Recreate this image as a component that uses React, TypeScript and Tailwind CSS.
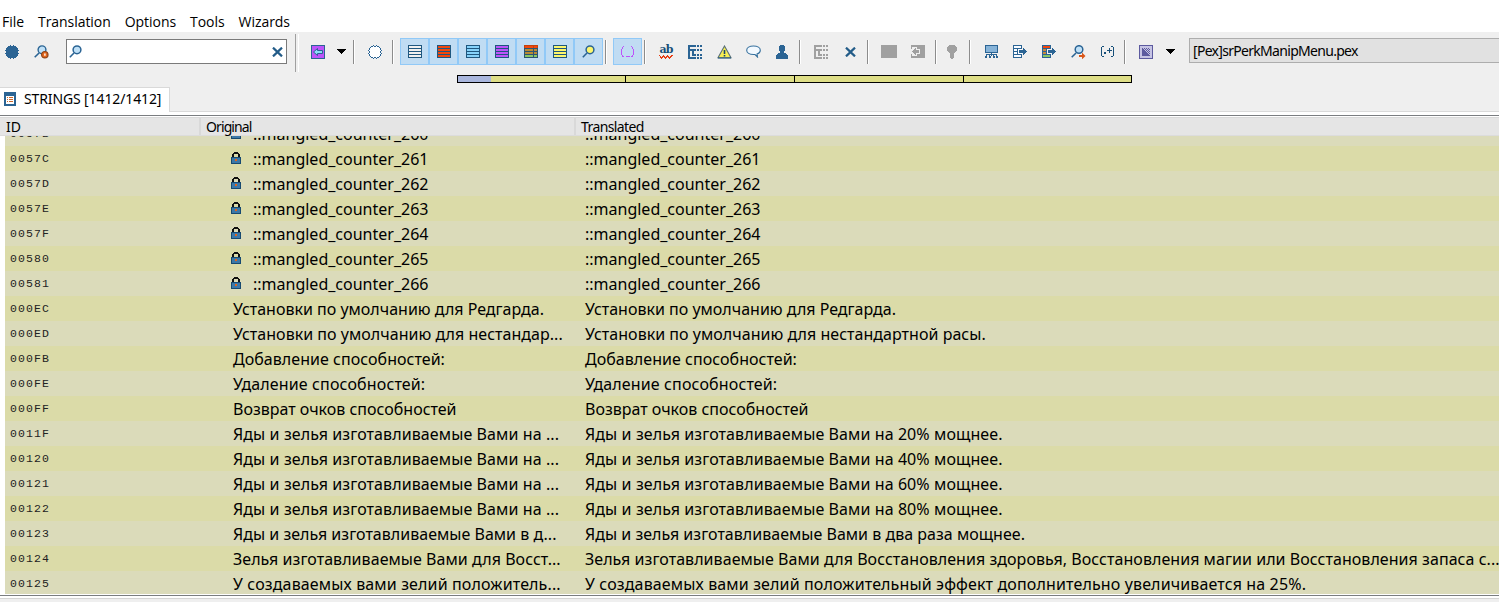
import type { ReactNode } from "react";

const NAVY = "#2b6494";

const YADY = "tracking-[0.095px]";
const ZELYA = "tracking-[0.05px]";
const BONUS = "tracking-[0.14px]";

const rows = [
  { id: "0057B", locked: true, original: "::mangled_counter_260", translated: "::mangled_counter_260" },
  { id: "0057C", locked: true, original: "::mangled_counter_261", translated: "::mangled_counter_261" },
  { id: "0057D", locked: true, original: "::mangled_counter_262", translated: "::mangled_counter_262" },
  { id: "0057E", locked: true, original: "::mangled_counter_263", translated: "::mangled_counter_263" },
  { id: "0057F", locked: true, original: "::mangled_counter_264", translated: "::mangled_counter_264" },
  { id: "00580", locked: true, original: "::mangled_counter_265", translated: "::mangled_counter_265" },
  { id: "00581", locked: true, original: "::mangled_counter_266", translated: "::mangled_counter_266" },
  { id: "000EC", original: "Установки по умолчанию для Редгарда.", translated: "Установки по умолчанию для Редгарда." },
  { id: "000ED", original: "Установки по умолчанию для нестандар...", translated: "Установки по умолчанию для нестандартной расы.", spacing: "tracking-[0.03px]" },
  { id: "000FB", original: "Добавление способностей:", translated: "Добавление способностей:", spacing: "tracking-[0.04px]" },
  { id: "000FE", original: "Удаление способностей:", translated: "Удаление способностей:", spacing: "tracking-[0.14px]" },
  { id: "000FF", original: "Возврат очков способностей", translated: "Возврат очков способностей" },
  { id: "0011F", original: "Яды и зелья изготавливаемые Вами на ...", translated: "Яды и зелья изготавливаемые Вами на 20% мощнее.", spacing: YADY },
  { id: "00120", original: "Яды и зелья изготавливаемые Вами на ...", translated: "Яды и зелья изготавливаемые Вами на 40% мощнее.", spacing: YADY },
  { id: "00121", original: "Яды и зелья изготавливаемые Вами на ...", translated: "Яды и зелья изготавливаемые Вами на 60% мощнее.", spacing: YADY },
  { id: "00122", original: "Яды и зелья изготавливаемые Вами на ...", translated: "Яды и зелья изготавливаемые Вами на 80% мощнее.", spacing: YADY },
  { id: "00123", original: "Яды и зелья изготавливаемые Вами в д...", translated: "Яды и зелья изготавливаемые Вами в два раза мощнее.", spacing: "tracking-[0.02px]" },
  { id: "00124", original: "Зелья изготавливаемые Вами для Восст...", translated: "Зелья изготавливаемые Вами для Восстановления здоровья, Восстановления магии или Восстановления запаса с...", spacing: ZELYA },
  { id: "00125", original: "У создаваемых вами зелий положитель...", translated: "У создаваемых вами зелий положительный эффект дополнительно увеличивается на 25%.", spacing: BONUS },
];

const Icon = ({ children, w = 14, h = 14 }: { children: ReactNode; w?: number; h?: number }) => (
  <svg width={w} height={h} viewBox={`0 0 ${w} ${h}`} shapeRendering="crispEdges" className="block shrink-0">
    {children}
  </svg>
);

const Slot = ({ children, on }: { children: ReactNode; on?: boolean }) => (
  <div
    className={
      on
        ? "flex h-[27px] w-[29px] shrink-0 items-center justify-center border border-[#91c9f7] bg-[#c0dcf3]"
        : "flex h-[27px] w-[29px] shrink-0 items-center justify-center pr-px"
    }
  >
    {children}
  </div>
);

const Sep = () => (
  <div className="h-6 w-[10px] shrink-0 pl-[2px]">
    <div className="h-full w-[2px] border-l border-r border-l-[#8c8c8c] border-r-white" />
  </div>
);

const Caret = () => (
  <Icon w={9} h={5}>
    <path d="M0 0h9v1H8v1H7v1H6v1H5v1H4V4H3V3H2V2H1V1H0z" fill="#000" />
  </Icon>
);

const Dot = () => (
  <Icon>
    <path d="M5 0h1v1h2V0h1v1h2v1h1v1h1v2h1v1h-1v2h1v1h-1v2h-1v1h-1v1H9v1H8v-1H6v1H5v-1H3v-1H2v-1H1V9H0V8h1V6H0V5h1V3h1V2h1V1h2z" fill={NAVY} />
  </Icon>
);

const DashedCircle = () => (
  <Icon>
    <path d="M5 1h4v1h2v1h1v2h1v4h-1v2h-1v1H9v1H5v-1H3v-1H2V9H1V5h1V3h1V2h2z" fill="#fff" />
    <path d="M5 0h1v1H5zM8 0h1v1H8zM6 1h2v1H6zM3 1h2v1H3zM9 1h2v1H9zM2 2h1v1H2zM11 2h1v1h-1zM1 3h1v2H1zM12 3h1v2h-1zM0 5h1v1H0zM13 5h1v1h-1zM1 6h1v2H1zM12 6h1v2h-1zM0 8h1v1H0zM13 8h1v1h-1zM1 9h1v2H1zM12 9h1v2h-1zM2 11h1v1H2zM11 11h1v1h-1zM3 12h2v1H3zM9 12h2v1H9zM5 13h1v1H5zM8 13h1v1H8zM6 12h2v1H6z" fill={NAVY} />
  </Icon>
);

const Lines = ({ fill }: { fill: string }) => (
  <Icon w={14} h={13}>
    <rect width="14" height="13" fill={fill} />
    <path d="M0 .5h14M0 3.5h14M0 6.5h14M0 9.5h14M0 12.5h14M.5 0v13M13.5 0v13" stroke="#1f577f" />
  </Icon>
);

const MixedLines = () => (
  <Icon w={14} h={13}>
    <rect width="14" height="4" fill="#f2460c" />
    <rect y="4" width="14" height="5" fill="#b98a35" />
    <rect y="9" width="14" height="4" fill="#8cc665" />
    <path d="M0 3.5h14M0 6.5h14M0 9.5h14M0 12.5h14M.5 3v10M9.5 3v10M13.5 3v10" stroke="#2a5572" />
    <path d="M0 .5h14M.5 0v3M9.5 0v3M13.5 0v3" stroke="#c2410c" />
  </Icon>
);

const Lens = ({ fill = "#bfe0f7" }: { fill?: string }) => (
  <svg width="13" height="13" viewBox="0 0 13 13" className="block shrink-0">
    <path d="M.8 12.2 5 8" stroke={NAVY} strokeWidth="1.6" />
    <circle cx="8" cy="4.8" r="3.9" fill={fill} stroke={NAVY} strokeWidth="1.5" />
  </svg>
);

const LensGear = () => (
  <svg width="15" height="14" viewBox="0 0 15 14" className="block">
    <path d="M.7 12.3 5 8" stroke={NAVY} strokeWidth="1.6" />
    <circle cx="8" cy="4.8" r="3.9" fill="#bfe0f7" stroke={NAVY} strokeWidth="1.4" />
    <circle cx="10.8" cy="9.7" r="3.2" fill="#e2651b" stroke="#8b4219" strokeWidth="1.2" />
    <path d="M10.2 8.6h1.4v2.2h-1.4z" fill="#fff" />
  </svg>
);

const LensArrow = () => (
  <svg width="15" height="14" viewBox="0 0 15 14" className="block">
    <path d="M.7 12.3 5 8" stroke={NAVY} strokeWidth="1.6" />
    <circle cx="8" cy="4.5" r="3.8" fill="#bfe0f7" stroke={NAVY} strokeWidth="1.5" />
    <path d="M8 10h3V7.500l3.500 3.500L11 14.300V12H8z" fill="#d9571a" />
  </svg>
);

const ImportBox = () => (
  <Icon>
    <rect x=".5" y=".5" width="13" height="13" fill="#bd54fa" stroke={NAVY} />
    <path d="M2.5 7 6.5 3.5v2h5v3h-5v2z" fill="#8bdcf8" stroke={NAVY} shapeRendering="auto" />
  </Icon>
);

const Brackets = () => (
  <Icon w={13} h={12}>
    <path d="M3 .5h-1M1.5 1v2M.5 3v6M1.5 9v2M2 10.500h1M10 .5h1M11.5 1v2M12.5 3v6M11.5 9v2M10 10.500h1M5 10.5h4" stroke="#bd54fa" fill="none" />
  </Icon>
);

const Spelling = () => (
  <div className="flex h-[14px] w-[14px] flex-col items-center">
    <span className="h-[10px] font-['DejaVu_Serif',serif] text-[11px] leading-[9px] font-bold tracking-[-0.8px] text-[#174f79]">ab</span>
    <Icon w={14} h={4}>
      <path d="M0 0h1v1H0zM1 1h1v2H1zM2 2h1v2H2zM3 1h1v2H3zM4 0h1v2H4zM5 1h1v2H5zM6 2h1v2H6zM7 1h1v2H7zM8 0h1v2H8zM9 1h1v2H9zM10 2h1v2h-1zM11 1h1v2h-1zM12 0h1v2h-1zM13 0h1v1h-1z" fill="#e63c12" />
    </Icon>
  </div>
);

const Tree = ({ color = NAVY }: { color?: string }) => (
  <Icon>
    <path d="M0 0h8v2H2v10h6v2H0z" fill={color} />
    <path d="M2 4h6v2H6v3h2v2H4V6H2z" fill={color} />
    <path d="M9 0h2v2H9zM12 0h2v2h-2zM9 4h2v2H9zM12 4h2v2h-2zM9 9h2v2H9zM12 9h2v2h-2zM9 12h2v2H9zM12 12h2v2h-2z" fill={color} />
  </Icon>
);

const Warning = () => (
  <svg width="15" height="14" viewBox="0 0 15 14" className="block">
    <path d="M7.5 1 14 12.8H1z" fill="#f6ee52" stroke="#5a7078" strokeWidth="1.1" />
    <path d="M1 13h13" stroke="#1f577f" />
    <path d="M6.7 5h1.6v4H6.7zM6.7 10h1.6v1.6H6.7z" fill="#16456a" />
  </svg>
);

const Bubble = () => (
  <svg width="15" height="13" viewBox="0 0 15 13" className="block">
    <path d="M7.5 1C3.500 1 .7 2.800.7 5.200S3.500 9.500 7.500 9.500h1.500L11.500 12 11 9C13 8.400 14.300 7 14.300 5.200 14.300 2.800 11.500 1 7.500 1z" fill="#f2f9ff" stroke="#37719e" strokeWidth="1.1" />
  </svg>
);

const Person = () => (
  <Icon w={12}>
    <path d="M4 0h4v1h1v5H8v2h2v1h1v1h1v4H0v-4h1V9h1V8h2V6H3V1h1z" fill={NAVY} />
  </Icon>
);

const Cross = () => (
  <svg width="11" height="10" viewBox="0 0 11 10" className="block">
    <path d="M1 .6 10 9.400M10 .6 1 9.400" stroke="#235c88" strokeWidth="2.200" />
  </svg>
);

const GrayImport = () => (
  <Icon h={13}>
    <path d="M0 0h14v13H0v-2h6V9h3V4H6V2H0z" fill="#a0a0a0" />
    <path d="M0 0h1v4H0zM0 9h1v4H0z" fill="#a0a0a0" />
    <path d="M1 2h4v1H1zM1 10h4v1H1z" fill="#efefef" />
    <path d="M1 6h1V5h1V4h1V3h1v2h3v3H5v2H4V9H3V8H2V7H1z" fill="#a0a0a0" />
  </Icon>
);

const Bulb = () => (
  <Icon w={10}>
    <path d="M2 0h6v1h1v1h1v4H9v1H8v1H7v1H3V8H2V7H1V6H0V2h1V1h1z" fill="#a0a0a0" />
    <path d="M3 9h4v4H6v1H4v-1H3z" fill="#a0a0a0" />
  </Icon>
);

const Network = () => (
  <Icon w={13} h={13}>
    <rect x=".5" y=".5" width="12" height="7" fill="#86b3d8" stroke={NAVY} />
    <path d="M6.500 8v3M1.500 12v-3M4.500 12v-3M8.500 12v-3M11.500 12v-3M1 9.500h11" stroke={NAVY} />
    <path d="M0 11h2v2H0zM3.500 11h2v2h-2zM7.500 11h2v2h-2zM11 11h2v2h-2z" fill={NAVY} />
  </Icon>
);

const Export = ({ mixed }: { mixed?: boolean }) => (
  <Icon>
    {mixed ? (
      <>
        <path d="M0 1h9v3H0z" fill="#f2460c" />
        <path d="M0 4h5v5H0z" fill="#c68a3b" />
        <path d="M0 10h9v3H0z" fill="#8cc665" />
      </>
    ) : (
      <path d="M1 1h8v12H1z" fill="#f8fbff" />
    )}
    <path d="M.5 0v13M0 .5h9M8.500 0v4M0 3.500h9M0 6.500h5M0 9.500h9M0 12.500h9M8.500 9v4M4.500 3v7" stroke={NAVY} />
    <path d="M6 5h4V3h1v1h1v1h1v1h1v1h-1v1h-1v1h-1v1h-1V8H6z" fill={NAVY} />
  </Icon>
);

const Regex = () => (
  <Icon w={13} h={11}>
    <path d="M1 .5h2M.5 1v9M1 10.500h2M10 .5h2M12.500 1v9M10 10.500h2M6 4.500h5M8.500 2v5" stroke="#174f79" fill="none" />
    <path d="M3 6h2v2H3z" fill="#174f79" />
  </Icon>
);

const Dither = () => (
  <Icon>
    <rect width="14" height="14" fill="#5c5a9f" />
    <rect x="1" y="1" width="12" height="12" fill="#c6c4e4" />
    <path d="M3 3h1v1h1v1h1v1h1v1h1v1h1v1h1v1h1v1H3z" fill="#5c5a9f" />
    <path d="M5 3h1v1H5zM7 3h1v1H7zM9 3h1v1H9zM6 4h1v1H6zM8 4h1v1H8zM10 4h1v1h-1zM7 5h1v1H7zM9 5h1v1H9zM8 6h1v1H8zM10 6h1v1h-1zM9 7h1v1H9zM10 8h1v1h-1z" fill="#5c5a9f" />
  </Icon>
);

const Lock = () => (
  <Icon w={10} h={12}>
    <path d="M3 0h4v1h1v1h1v3H7V2H3v3H1V2h1V1h1z" fill="#111" />
    <rect y="5" width="10" height="7" fill="#174a70" />
    <rect x="1" y="6" width="8" height="5" fill="#3c78a8" />
    <rect x="4" y="7" width="2" height="2" fill="#e2651b" />
  </Icon>
);

const TabIcon = () => (
  <Icon w={12} h={14}>
    <rect width="12" height="14" fill="#2b6494" />
    <rect x="2" y="4" width="8" height="8" fill="#fff" />
    <path d="M3 5.500h1M5 5.500h4M3 7.500h1M5 7.500h4M3 9.500h1M5 9.500h4" stroke="#c8662a" />
  </Icon>
);

const MenuBar = () => (
  <div className="flex h-8 gap-[14px] bg-white pt-3 pl-[2px] font-['Open_Sans','Noto_Sans',sans-serif] text-[14px] leading-5 tracking-[-0.05px]">
    <span>File</span>
    <span>Translation</span>
    <span>Options</span>
    <span>Tools</span>
    <span>Wizards</span>
  </div>
);

const Toolbar = () => (
  <div className="flex h-[43px] shrink-0 items-start overflow-hidden bg-[#efefef] pt-[6px]">
    <div className="flex h-[27px] w-[66px] shrink-0 items-center gap-[15px] pl-[5px]">
      <Dot />
      <LensGear />
    </div>
    <div className="mt-px flex h-[25px] w-[221px] shrink-0 items-center justify-between border border-[#7a7a7a] bg-white pr-[3px] pl-[2px]">
      <Lens />
      <Cross />
    </div>
    <div className="-mt-1 ml-2 h-[38px] w-[9px] shrink-0">
      <div className="h-full w-[4px] border-l border-r border-l-[#a0a0a0] border-r-white" />
    </div>
    <div className="flex h-[27px] shrink-0 items-center">
      <Slot><ImportBox /></Slot>
      <div className="flex w-[18px] justify-center pr-px"><Caret /></div>
      <Sep />
      <Slot><DashedCircle /></Slot>
      <Sep />
      <Slot on><Lines fill="#f0f0f0" /></Slot>
      <Slot on><Lines fill="#f2460c" /></Slot>
      <Slot on><Lines fill="#86d2fa" /></Slot>
      <Slot on><Lines fill="#bd54fa" /></Slot>
      <Slot on><MixedLines /></Slot>
      <Slot on><Lines fill="#fcf66e" /></Slot>
      <Slot on><Lens fill="#fcf66e" /></Slot>
      <Sep />
      <Slot on><Brackets /></Slot>
      <Sep />
      <Slot><Spelling /></Slot>
      <Slot><Tree /></Slot>
      <Slot><Warning /></Slot>
      <Slot><Bubble /></Slot>
      <Slot><Person /></Slot>
      <Sep />
      <Slot><Tree color="#a0a0a0" /></Slot>
      <Slot><Cross /></Slot>
      <Sep />
      <Slot><div className="h-[13px] w-4 bg-[#a0a0a0]" /></Slot>
      <Slot><GrayImport /></Slot>
      <Sep />
      <div className="w-6 pl-1"><Bulb /></div>
      <Sep />
      <Slot><Network /></Slot>
      <Slot><Export /></Slot>
      <Slot><Export mixed /></Slot>
      <Slot><LensArrow /></Slot>
      <Slot><Regex /></Slot>
      <Sep />
      <Slot><Dither /></Slot>
      <div className="w-7 pl-[5px]"><Caret /></div>
    </div>
    <div className="h-[25px] flex-1 border border-r-0 border-[#adadad] bg-[#e1e1e1] pl-[3px] font-['Noto_Sans',sans-serif] text-[14px] leading-[23px] tracking-[-0.7px]">
      [Pex]srPerkManipMenu.pex
    </div>
  </div>
);

const ProgressBar = () => (
  <div className="ml-[457px] flex h-2 w-[675px] shrink-0 border border-black bg-[#dede87]">
    <div className="h-full w-[168px] border-r border-black">
      <div className="h-full w-[33px] bg-[#a9b6dd]" />
    </div>
    <div className="h-full w-[169px] border-r border-black" />
    <div className="h-full w-[169px] border-r border-black" />
  </div>
);

type RowProps = { id: string; locked?: boolean; original: string; translated: string; spacing?: string };

const Row = ({ id, locked, original, translated, spacing }: RowProps) => (
  <div className="flex h-[25px] shrink-0 leading-[27px] whitespace-nowrap odd:bg-[#dbdbba] even:bg-[#dbdba8]">
    <div className="w-[226px] shrink-0 pl-[5px] font-['Liberation_Mono',monospace] text-[11.5px] leading-[25px] tracking-[1.1px] text-[#222]">
      {id}
    </div>
    <div className="flex w-[354px] shrink-0">
      {locked ? (
        <span className="flex h-6 w-[22px] shrink-0 items-center"><Lock /></span>
      ) : (
        <span className="w-[2px] shrink-0" />
      )}
      <span className={spacing}>{original}</span>
    </div>
    <div className={spacing}>{translated}</div>
  </div>
);

const App = () => (
  <div className="flex h-[602px] w-[1499px] flex-col overflow-hidden bg-[#efefef] font-['Noto_Sans',sans-serif] text-black">
    <MenuBar />
    <Toolbar />
    <ProgressBar />
    <div className="mt-1 flex h-[25px] shrink-0">
      <div className="flex w-[170px] border-t border-r border-[#d9d9d9] bg-white pt-[4px] pl-1">
        <TabIcon />
        <span className="-mt-[3px] ml-2 text-[14px] leading-5 tracking-[-0.12px] whitespace-nowrap">STRINGS [1412/1412]</span>
      </div>
      <div className="flex-1 border-b border-[#d9d9d9]" />
    </div>
    <div className="h-[3px] shrink-0 bg-white" />
    <div className="flex h-[481px] shrink-0 flex-col border-y border-[#7a7d80] bg-white pt-px">
      <div className="flex h-[19px] shrink-0 border-t border-b border-t-[#d9d9d9] border-b-[#dcdcdc] bg-[#e5e5e5] text-[14px] leading-[17px] tracking-[-0.6px]">
        <div className="w-[201px] border-r-2 border-[#d9d9d9] pl-[6px] tracking-normal">ID</div>
        <div className="w-[375px] border-r-2 border-[#d9d9d9] pl-[5px] tracking-[-0.9px]">Original</div>
        <div className="pl-[5px]">Translated</div>
      </div>
      <div className="ml-[5px] flex h-[458px] flex-col justify-end overflow-hidden text-[16px]">
        <div className="-mb-[2px] flex flex-col">
          {rows.map((row) => (
            <Row key={row.id} {...row} />
          ))}
        </div>
      </div>
    </div>
    <div className="h-[2px] shrink-0 bg-white" />
    <div className="h-px shrink-0 bg-[#d5d5d5]" />
  </div>
);

export default App;
